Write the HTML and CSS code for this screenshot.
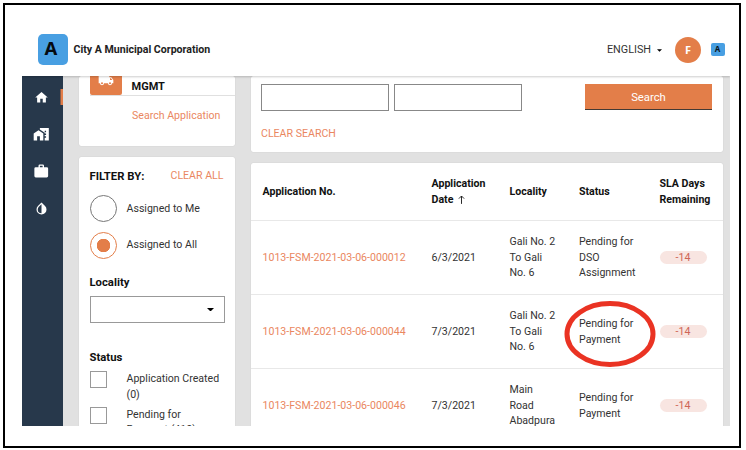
FILE: index.html
```
<!DOCTYPE html>
<html lang="en">
<head>
<meta charset="utf-8">
<title>City A Municipal Corporation</title>
<link rel="stylesheet" href="styles.css">
</head>
<body>
<div class="frame">
  <div class="app">
    <header class="topbar">
      <span class="logo">A</span>
      <span class="title">City A Municipal Corporation</span>
      <span class="language">ENGLISH</span>
      <svg class="lang-caret" viewBox="0 0 10 5"><path d="M0 0h10L5 5z"/></svg>
      <span class="avatar">F</span>
      <span class="logo-small">A</span>
    </header>
    <div class="body">
      <nav class="sidebar">
        <a class="active"><svg viewBox="0 0 24 24"><path d="M10 20v-6h4v6h5v-8h3L12 3 2 12h3v8z"/></svg></a>
        <a><svg class="wide" viewBox="0 0 24 24"><path d="M1 11v10h5v-6h4v6h5V11L8 6z"/><path d="M10 3v1.970l7 5V11h2v2h-2v2h2v2h-2v4h6V3H10zm9 6h-2V7h2v2z"/></svg></a>
        <a><svg class="wide" viewBox="0 0 24 24"><path d="M10 2h4a2 2 0 0 1 2 2v2h4a2 2 0 0 1 2 2v11a2 2 0 0 1-2 2H4a2 2 0 0 1-2-2V8a2 2 0 0 1 2-2h4V4a2 2 0 0 1 2-2zm4 4V4h-4v2z"/></svg></a>
        <a><svg viewBox="0 0 24 24"><path d="M17.660 7.930L12 2.270 6.340 7.930a8 8 0 0 0 0 11.310A7.980 7.980 0 0 0 12 21.580a7.980 7.980 0 0 0 5.660-2.340 8 8 0 0 0 0-11.310zM12 19.590a5.990 5.990 0 0 1-6-6c0-1.600.620-3.110 1.760-4.240L12 5.100v14.490z"/></svg></a>
      </nav>
      <aside class="left">
        <section class="card module">
          <div class="module-head">
            <span class="truck"><svg viewBox="0 0 24 24"><path d="M17 8h3l3 4v5h-2a3 3 0 0 1-6 0H9a3 3 0 0 1-6 0H1V3h16zm1 1.500V12h3.500L19.500 9.500zM6 15.500a1.500 1.500 0 1 0 0 3 1.500 1.500 0 0 0 0-3zm12 0a1.500 1.500 0 1 0 0 3 1.500 1.500 0 0 0 0-3z"/></svg></span>
            <span class="module-title">MGMT</span>
          </div>
          <a class="module-link">Search Application</a>
        </section>
        <section class="card filter">
          <div class="filter-head"><b>FILTER BY:</b><a>CLEAR ALL</a></div>
          <div class="radio"><i></i><span>Assigned to Me</span></div>
          <div class="radio on"><i></i><span>Assigned to All</span></div>
          <h4>Locality</h4>
          <div class="select"><svg viewBox="0 0 10 5"><path d="M0 0h10L5 5z"/></svg></div>
          <h4 class="status-title">Status</h4>
          <div class="check"><i></i><span>Application Created (0)</span></div>
          <div class="check"><i></i><span>Pending for Payment (410)</span></div>
        </section>
      </aside>
      <main class="right">
        <section class="card search">
          <div class="fields"><span class="input"></span><span class="input"></span><span class="button">Search</span></div>
          <a class="clear">CLEAR SEARCH</a>
        </section>
        <section class="card table">
          <div class="row head">
            <span>Application No.</span>
            <span>Application<br>Date <svg class="arrow" viewBox="0 0 8 10"><path d="M4 10V1M1 4l3-3 3 3"/></svg></span>
            <span>Locality</span><span>Status</span><span>SLA Days Remaining</span>
          </div>
          <div class="row">
            <a>1013-FSM-2021-03-06-000012</a><span>6/3/2021</span><span>Gali No. 2<br>To Gali<br>No. 6</span><span>Pending for<br>DSO<br>Assignment</span><span class="sla">-14</span>
          </div>
          <div class="row">
            <a>1013-FSM-2021-03-06-000044</a><span>7/3/2021</span><span>Gali No. 2<br>To Gali<br>No. 6</span><span class="marked">Pending for<br>Payment<svg class="ring" viewBox="0 0 92 68"><ellipse cx="46" cy="34" rx="43" ry="30.500"/></svg></span><span class="sla">-14</span>
          </div>
          <div class="row">
            <a>1013-FSM-2021-03-06-000046</a><span>7/3/2021</span><span>Main<br>Road<br>Abadpura</span><span>Pending for<br>Payment</span><span class="sla">-14</span>
          </div>
        </section>
      </main>
    </div>
  </div>
</div>
</body>
</html>
```
FILE: styles.css
```
* { box-sizing: border-box; }
body { margin: 0; padding: 3px; background: #fff; font: 10.6px/15.8px Roboto, sans-serif; color: #333; }
.frame { width: 738px; height: 445px; border: 2px solid #000; padding: 17px; overflow: hidden; }
.app { width: 708px; height: 404px; overflow: hidden; }
svg { display: block; }
a { color: #ea875f; }

.topbar { height: 54px; display: flex; align-items: center; padding: 0 5px 0 15.5px; position: relative; z-index: 1; background: #fff; box-shadow: 0 1px 2px rgba(0,0,0,.2); }
.logo { width: 30px; height: 31px; border-radius: 5px; background: #489fe2; color: #050a10; font: bold 18.5px/28px "Noto Sans", sans-serif; text-align: center; padding-right: 3px; }
.title { margin-left: 6px; padding-top: 1px; font-weight: 700; color: #222; }
.language { margin-left: auto; padding-top: 2px; color: #333; font-size: 10.8px; }
.lang-caret { width: 5px; height: 3px; margin: 2px 13px 0 6px; }
.avatar { width: 26px; height: 26px; margin-top: 1px; border-radius: 50%; background: #e37e49; color: #fff; font: bold 11px/26px "Noto Sans", sans-serif; text-align: center; }
.logo-small { width: 14px; height: 13px; margin: 1px 0 0 10px; border-radius: 2px; background: #489fe2; color: #0a1520; font: bold 8px/12px "Noto Sans", sans-serif; text-align: center; padding-right: 1px; }

.body { height: 350px; display: flex; align-items: flex-start; background: #e1e1e1; }
.sidebar { width: 41px; height: 350px; background: #27384b; padding-top: 13px; display: flex; flex-direction: column; gap: 21.3px; }
.sidebar a { height: 16px; display: flex; justify-content: center; align-items: center; padding-right: 2px; }
.sidebar a.active { box-shadow: inset -2.5px 0 #e37e49; }
.sidebar svg { width: 15px; height: 15px; fill: #fff; flex: none; }
.sidebar svg.wide { width: 16.5px; height: 16.5px; }

.card { background: #fff; border-radius: 2px; box-shadow: 0 0 1px rgba(0,0,0,.2); }
.left { width: 155.5px; margin-left: 16px; }
.module { height: 70px; }
.module-head { height: 20px; margin-left: 10.5px; display: flex; border-bottom: 1px solid #e0e0e0; }
.truck { width: 32px; height: 19px; background: #e37e49; border-radius: 0 0 2px 2px; display: flex; justify-content: center; align-items: flex-end; padding-bottom: 7px; }
.truck svg { width: 16px; height: 16px; flex: none; fill: #fff; }
.module-title { margin-left: 10px; padding-top: 3px; font-weight: 700; font-size: 11px; color: #111; }
.module-link { display: block; margin: 12px 0 0 53px; }
.filter { margin-top: 11px; height: 300px; padding: 11px 11px 0 10.5px; }
.filter-head { display: flex; justify-content: space-between; height: 16px; }
.filter-head b { font-size: 11.3px; line-height: 17px; color: #111; }
.filter-head a { line-height: 15px; }
.radio { display: flex; align-items: center; height: 27px; margin-top: 11px; }
.radio i { width: 27px; height: 27px; border: 1px solid #777; border-radius: 50%; margin-right: 10px; }
.radio.on { margin-top: 9.5px; }
.radio.on i { border-color: #e37e49; background: radial-gradient(circle, #e37e49 6.500px, transparent 7px); }
h4 { margin: 16.5px 0 5px; font-size: 11.3px; line-height: 16px; color: #111; }
.select { width: 135px; height: 27px; border: 1px solid #999; display: flex; align-items: center; justify-content: flex-end; padding-right: 10px; }
.select svg { width: 7px; height: 3.5px; }
.status-title { margin: 27px 0 5px; }
.check { display: flex; align-items: flex-start; margin-bottom: 4px; }
.check i { width: 17px; height: 17px; border: 1px solid #999; flex: none; margin-right: 20px; }
.check span { width: 96px; }

.right { width: 472px; margin-left: 16.5px; }
.search { height: 76px; padding: 8px 11px 0 10px; }
.fields { display: flex; }
.input { width: 128px; height: 27px; border: 1px solid #888; margin-right: 5px; }
.button { width: 127px; height: 26px; margin-left: auto; background: #e37e49; border-bottom: 1px solid #443a34; color: #fff; text-align: center; line-height: 27px; font-size: 11.3px; }
.clear { display: block; margin-top: 15px; }
.table { margin-top: 11px; height: 280px; }
.row { display: grid; grid-template-columns: 169px 78px 69.5px 80.5px 60px; align-items: center; height: 74px; padding-left: 11.5px; border-bottom: 1px solid #e8e8e8; }
.row.head { height: 58px; font-weight: 700; color: #111; }
.arrow { display: inline-block; width: 7px; height: 9px; vertical-align: -1.5px; margin-left: 2px; fill: none; stroke: #222; stroke-width: 1.1; }
.sla { width: 47px; height: 13px; border-radius: 7px; background: #f8e5e1; color: #cf6557; text-align: center; line-height: 13px; }
.marked { position: relative; }
.ring { position: absolute; left: -15px; top: -16px; width: 92px; height: 68px; fill: none; stroke: #ea3323; stroke-width: 5; }
```
